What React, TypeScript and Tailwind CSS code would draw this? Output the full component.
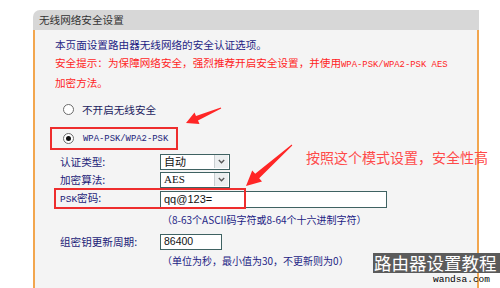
import React from 'react';

const cjk = { fontFamily: '"Noto Sans CJK SC", "Noto Sans", sans-serif' };
const mono = { fontFamily: '"Liberation Mono", "DejaVu Sans Mono", monospace' };

// --- Small form pieces ---
const Radio: React.FC<{ checked?: boolean }> = ({ checked }) => (
  <span className="w-[11px] h-[11px] rounded-full border border-[#6b6b6b] bg-white flex items-center justify-center shrink-0">
    {checked && <span className="w-[5px] h-[5px] rounded-full bg-[#111]"></span>}
  </span>
);

const Select: React.FC<{ value: string; serif?: boolean }> = ({ value, serif }) => (
  <div className="w-[70px] h-[16px] border border-[#3f6262] bg-white flex items-center">
    <span
      className="flex-1 pl-[3px] text-[11px] leading-none text-[#111]"
      style={serif ? { fontFamily: '"Liberation Serif", serif' } : cjk}
    >
      {value}
    </span>
    <span className="w-[14px] h-[13px] mr-[1px] bg-[#eceff0] border-l border-[#c9cfd1] flex items-center justify-center">
      <svg width="7" height="5" viewBox="0 0 7 5">
        <path d="M0.8 1 L3.5 3.8 L6.2 1" fill="none" stroke="#555" strokeWidth="1.3" />
      </svg>
    </span>
  </div>
);

const Label: React.FC<{ children: React.ReactNode }> = ({ children }) => (
  <div className="w-[100px] text-[10.6px] text-[#1c1c78]" style={cjk}>{children}</div>
);

export default function App() {
  return (
    <div className="w-[500px] h-[288px] relative overflow-hidden bg-white" style={cjk}>
      {/* Panel */}
      <div className="mt-[10px] ml-[33px] w-[446px]">
        <div className="h-[20px] bg-[#d7d7d7] rounded-tl-[7px] flex items-center pl-[6px] text-[10.6px] text-[#333]">
          无线网络安全设置
        </div>
        <div className="h-[260px] bg-[#f4f4f4] border-x-2 border-[#f2a64e] pt-[6px]">
          <div className="pl-[20px] text-[10.6px] leading-[17.5px]">
            <div className="text-[#1e1e84]">本页面设置路由器无线网络的安全认证选项。</div>
            <div className="text-[#ff1f1f]">
              安全提示：为保障网络安全，强烈推荐开启安全设置，并使用
              <span className="text-[8.9px]" style={mono}>WPA-PSK/WPA2-PSK AES</span>
            </div>
            <div className="text-[#ff1f1f]">加密方法。</div>
          </div>

          {/* Radio options */}
          <div className="mt-[10px] ml-[28px] h-[16px] flex items-center gap-[8px] text-[10.6px] text-[#1c1c60]">
            <Radio />
            <span>不开启无线安全</span>
          </div>
          <div className="mt-[9px] ml-[15px] w-[128px] h-[23px] border-2 border-[#ee2d2d] flex items-center pl-[11px] gap-[9px]">
            <Radio checked />
            <span className="text-[8.9px] text-[#1c1c78] pt-[3px]" style={mono}>WPA-PSK/WPA2-PSK</span>
          </div>

          {/* Fields */}
          <div className="ml-[25px]">
            <div className="mt-[4px] h-[16px] flex items-center">
              <Label>认证类型:</Label>
              <Select value="自动" />
            </div>
            <div className="mt-[2px] h-[16px] flex items-center">
              <Label>加密算法:</Label>
              <Select value="AES" serif />
            </div>
            <div className="relative mt-[3px] h-[17px] flex items-center">
              <Label>
                <span className="text-[9.5px]" style={mono}>PSK</span>密码:
              </Label>
              <div className="w-[227px] h-[17px] border border-[#3f6262] bg-white flex items-center pl-[3px] text-[11px] text-[#111]" style={{ fontFamily: '"Liberation Sans", sans-serif' }}>
                qq@123=
              </div>
              {/* annotation box */}
              <div className="absolute left-[-6px] top-[-3px] w-[192px] h-[21px] border-2 border-[#ee2d2d]"></div>
            </div>
            <div className="mt-[4px] h-[16px] flex items-center pl-[102px] text-[10px] text-[#1c1c84]">
              （8-63个ASCII码字符或8-64个十六进制字符）
            </div>
            <div className="mt-[6px] h-[16px] flex items-center">
              <Label>组密钥更新周期:</Label>
              <div className="w-[62px] h-[16px] border border-[#3f6262] bg-white flex items-center pl-[3px] text-[10.5px] text-[#111]" style={{ fontFamily: '"Liberation Sans", sans-serif' }}>
                86400
              </div>
            </div>
            <div className="mt-[3px] h-[16px] flex items-center pl-[102px] text-[10px] text-[#1c1c84]">
              （单位为秒，最小值为30，不更新则为0）
            </div>
          </div>
        </div>
      </div>

      {/* Annotation text */}
      <div className="absolute left-[306px] top-[148px] text-[14px] leading-[18px] text-[#ff4a4a] whitespace-nowrap">
        按照这个模式设置，安全性高
      </div>

      {/* Arrows */}
      <svg className="absolute inset-0 pointer-events-none" width="500" height="288" viewBox="0 0 500 288">
        <polygon
          fill="#ff2626"
          points="221.2,108.5 198,120.6 199.5,124 186,123 194.5,112.6 196,116 220.8,107.5"
        />
        <polygon
          fill="#ff2626"
          points="292.3,145.4 259.2,178.2 262,181.5 246,186 252.2,170.5 255.2,173.8 291.7,144.6"
        />
      </svg>

      {/* Watermark */}
      <div className="absolute left-[373px] top-[253px] w-[127px] h-[20px] bg-[#5b5b5b] flex items-center pl-[1px] text-[17.5px] leading-none text-white whitespace-nowrap">
        路由器设置教程
      </div>
      <div className="absolute left-[433px] top-[274px] text-[9.5px] leading-[12px] text-black" style={mono}>
        wandsa.com
      </div>
    </div>
  );
}
